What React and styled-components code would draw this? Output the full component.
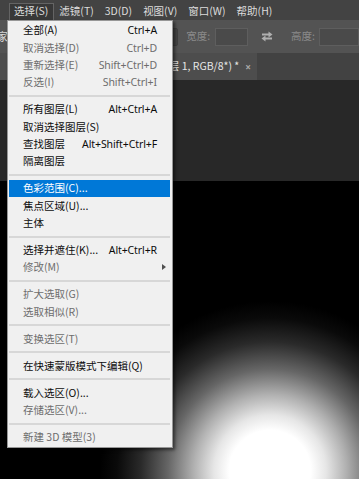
import React from 'react';
import styled, { createGlobalStyle, css } from 'styled-components';

const Global = createGlobalStyle`
  html, body { margin: 0; padding: 0; background: #000; overflow: hidden; }
  #root { width: 359px; height: 479px; }
`;

const Screen = styled.div`
  position: relative;
  width: 359px;
  height: 479px;
  overflow: hidden;
  display: flex;
  flex-direction: column;
  font-family: "Noto Sans CJK SC", "Noto Sans", sans-serif;
  background: #282828;
`;

const MenuBar = styled.div`
  height: 20px;
  flex: none;
  background: #434343;
  display: flex;
  align-items: flex-start;
  padding-left: 9px;
  gap: 0;
`;

const MenuBarItem = styled.div`
  margin-top: 3px;
  height: 17px;
  box-sizing: border-box;
  display: flex;
  align-items: center;
  padding: 0 5px 1px 4px;
  border: 1px solid transparent;
  border-bottom: none;
  font-size: 10.5px;
  line-height: 1;
  color: #dcdcdc;
  white-space: nowrap;
  ${p => p.$active && css`
    background: #383838;
    border-color: #646464;
  `}
`;

const OptionsBar = styled.div`
  height: 33px;
  flex: none;
  background: #535353;
  display: flex;
  align-items: center;
  font-size: 10.5px;
  color: #d8d8d8;
  white-space: nowrap;
`;

const Fragment = styled.span`
  margin-left: -3px;
  width: 12px;
  line-height: 1;
  font-size: 11px;
  color: #d6d6d6;
`;

const Dropdown = styled.div`
  margin-left: 135px;
  width: 60px;
  height: 18px;
  box-sizing: border-box;
  background: #454545;
  border: 1px solid #3f3f3f;
  border-radius: 2px;
  display: flex;
  align-items: center;
  justify-content: flex-end;
  padding-right: 4px;
`;

const FieldLabel = styled.span`
  margin-left: ${p => p.$ml}px;
  color: #8a8a8a;
  line-height: 1;
`;

const Field = styled.div`
  margin-left: ${p => p.$ml}px;
  width: ${p => p.$w}px;
  height: 18px;
  flex: none;
  box-sizing: border-box;
  background: #4a4a4a;
  border: 1px solid #5e5e5e;
`;

const SwapIcon = styled.svg`
  margin-left: 13px;
  flex: none;
`;

const TabBar = styled.div`
  height: 27px;
  flex: none;
  background: #424242;
  display: flex;
`;

const Tab = styled.div`
  width: 257px;
  overflow: hidden;
  background: #4d4d4d;
  display: flex;
  align-items: center;
  justify-content: flex-end;
  gap: 6px;
  padding-right: 6px;
  box-sizing: border-box;
`;

const TabLabel = styled.span`
  flex: none;
  white-space: nowrap;
  font-size: 10.5px;
  line-height: 1;
  color: #e6e6e6;
`;

const TabClose = styled.span`
  flex: none;
  font-family: "Noto Sans", sans-serif;
  font-size: 10px;
  font-weight: 700;
  line-height: 1;
  color: #a8a8a8;
`;

const Workspace = styled.div`
  flex: 1;
  display: flex;
  flex-direction: column;
  padding-top: 101px;
  background: #282828;
`;

const Canvas = styled.div`
  flex: 1;
  background: radial-gradient(circle 170px at 270px 290px,
    #ffffff 0%, #ffffff 24%, #e6e6e6 33%, #b0b0b0 45%, #666 60%,
    #2a2a2a 76%, #0a0a0a 90%, #000 100%);
`;

const Menu = styled.div`
  position: absolute;
  top: 20px;
  left: 7px;
  width: 166px;
  box-sizing: border-box;
  background: #f0f0f0;
  border: 1px solid #979797;
  box-shadow: 2px 2px 3px rgba(0, 0, 0, 0.5);
  padding: 1px 2px 1px 1px;
  display: flex;
  flex-direction: column;
`;

const Item = styled.div`
  position: relative;
  height: 17.33px;
  flex: none;
  display: flex;
  align-items: center;
  justify-content: space-between;
  gap: 4px;
  padding: 0 13px 0 14px;
  font-size: 10.5px;
  line-height: 1;
  white-space: nowrap;
  color: ${p => (p.$disabled ? '#6d6d6d' : '#0c0c0c')};
  ${p => p.$hover && css`
    background: #0078d7;
    color: #fff;
  `}
`;

const Label = styled.span`
  font-family: "Noto Sans CJK SC", sans-serif;
`;

const Shortcut = styled.span`
  font-family: "Noto Sans", "Noto Sans CJK SC", sans-serif;
  letter-spacing: -0.1px;
`;

const SubArrow = styled.span`
  position: absolute;
  right: 4px;
  top: 5px;
  width: 0;
  height: 0;
  border-top: 3.5px solid transparent;
  border-bottom: 3.5px solid transparent;
  border-left: 4px solid #505050;
`;

const Separator = styled.div`
  height: 9.67px;
  flex: none;
  display: flex;
  align-items: center;
  &::before {
    content: "";
    flex: 1;
    height: 2px;
    background: #d7d7d7;
  }
`;

const menu = [
  ['全部(A)', 'Ctrl+A'],
  ['取消选择(D)', 'Ctrl+D', 'd'],
  ['重新选择(E)', 'Shift+Ctrl+D', 'd'],
  ['反选(I)', 'Shift+Ctrl+I', 'd'],
  '-',
  ['所有图层(L)', 'Alt+Ctrl+A'],
  ['取消选择图层(S)'],
  ['查找图层', 'Alt+Shift+Ctrl+F'],
  ['隔离图层'],
  '-',
  ['色彩范围(C)...', '', 'h'],
  ['焦点区域(U)...'],
  ['主体'],
  '-',
  ['选择并遮住(K)...', 'Alt+Ctrl+R'],
  ['修改(M)', '', 'ds'],
  '-',
  ['扩大选取(G)', '', 'd'],
  ['选取相似(R)', '', 'd'],
  '-',
  ['变换选区(T)', '', 'd'],
  '-',
  ['在快速蒙版模式下编辑(Q)'],
  '-',
  ['载入选区(O)...'],
  ['存储选区(V)...', '', 'd'],
  '-',
  ['新建 3D 模型(3)', '', 'd'],
];

const bar = ['选择(S)', '滤镜(T)', '3D(D)', '视图(V)', '窗口(W)', '帮助(H)'];

export default function App() {
  return (
    <>
      <Global />
      <Screen>
        <MenuBar>
          {bar.map((b, i) => (
            <MenuBarItem key={b} $active={i === 0}>{b}</MenuBarItem>
          ))}
        </MenuBar>
        <OptionsBar>
          <Fragment>家</Fragment>
          <Dropdown>
            <svg width="7" height="5" viewBox="0 0 7 5">
              <path d="M1 1 L3.5 3.5 L6 1" fill="none" stroke="#a8a8a8" strokeWidth="1" />
            </svg>
          </Dropdown>
          <FieldLabel $ml={8}>宽度:</FieldLabel>
          <Field $ml={5} $w={33} />
          <SwapIcon width="12" height="11" viewBox="0 0 12 11">
            <path d="M1 3.5 H8" stroke="#b0b0b0" strokeWidth="2" />
            <path d="M7.5 0.5 L11.5 3.5 L7.5 6.5 Z" fill="#b0b0b0" />
            <path d="M11 7.5 H4" stroke="#b0b0b0" strokeWidth="2" />
            <path d="M4.5 4.5 L0.5 7.5 L4.5 10.5 Z" fill="#b0b0b0" />
          </SwapIcon>
          <FieldLabel $ml={18}>高度:</FieldLabel>
          <Field $ml={4} $w={40} />
        </OptionsBar>
        <TabBar>
          <Tab>
            <TabLabel>图层 1, RGB/8*) *</TabLabel>
            <TabClose>×</TabClose>
          </Tab>
        </TabBar>
        <Workspace>
          <Canvas />
        </Workspace>
        <Menu>
          {menu.map((m, i) =>
            m === '-' ? (
              <Separator key={i} />
            ) : (
              <Item
                key={i}
                $disabled={(m[2] || '').includes('d')}
                $hover={m[2] === 'h'}
              >
                <Label>{m[0]}</Label>
                {m[1] ? <Shortcut>{m[1]}</Shortcut> : null}
                {(m[2] || '').includes('s') ? <SubArrow /> : null}
              </Item>
            )
          )}
        </Menu>
      </Screen>
    </>
  );
}
